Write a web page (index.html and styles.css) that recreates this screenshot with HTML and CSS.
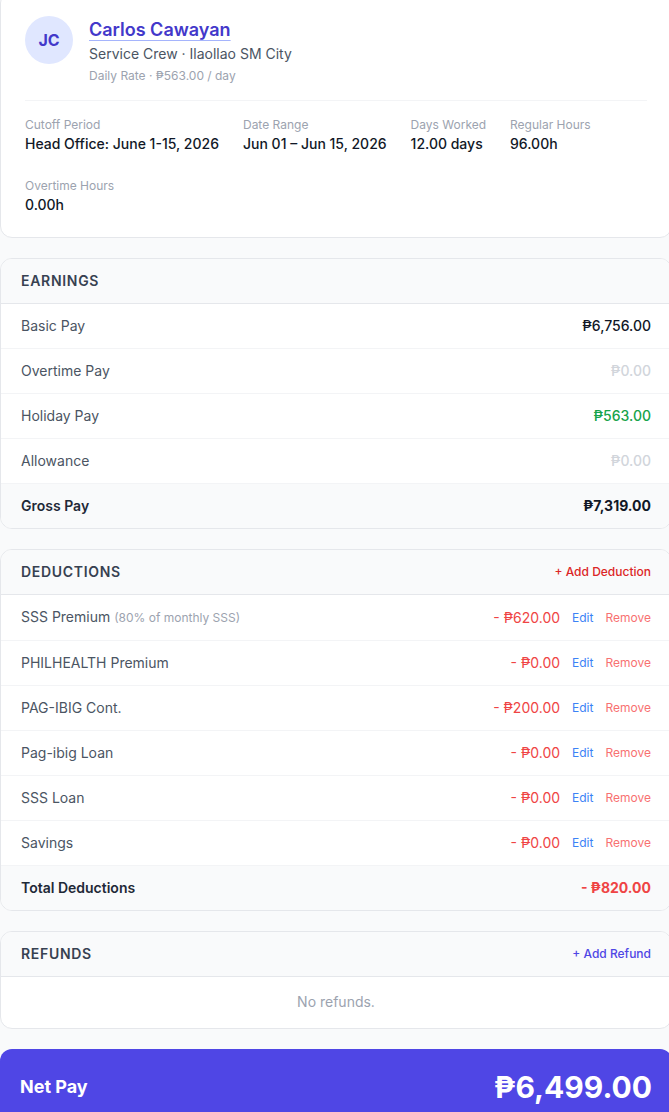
FILE: index.html
```html
<!DOCTYPE html>
<html lang="en">
<head>
    <meta charset="UTF-8">
    <meta name="viewport" content="width=device-width, initial-scale=1.0">
    <title>Payslip - Carlos Cawayan</title>
    <link rel="stylesheet" href="styles.css">
</head>
<body>
    <div class="page">
        <!-- employee summary -->
        <div class="card profile">
            <div class="profile-head">
                <div class="avatar">JC</div>
                <div>
                    <a class="name" href="#">Carlos Cawayan</a>
                    <div class="role">Service Crew · Ilaollao SM City</div>
                    <div class="rate">Daily Rate · ₱563.00 / day</div>
                </div>
            </div>
            <div class="details">
                <div class="detail">
                    <div class="detail-label">Cutoff Period</div>
                    <div class="detail-value">Head Office: June 1-15, 2026</div>
                </div>
                <div class="detail">
                    <div class="detail-label">Date Range</div>
                    <div class="detail-value">Jun 01 – Jun 15, 2026</div>
                </div>
                <div class="detail">
                    <div class="detail-label">Days Worked</div>
                    <div class="detail-value">12.00 days</div>
                </div>
                <div class="detail">
                    <div class="detail-label">Regular Hours</div>
                    <div class="detail-value">96.00h</div>
                </div>
                <div class="detail">
                    <div class="detail-label">Overtime Hours</div>
                    <div class="detail-value">0.00h</div>
                </div>
            </div>
        </div>

        <!-- earnings -->
        <div class="card section">
            <div class="section-head">
                <h3>EARNINGS</h3>
            </div>
            <div class="row">
                <span class="row-label">Basic Pay</span>
                <span class="amount">₱6,756.00</span>
            </div>
            <div class="row">
                <span class="row-label">Overtime Pay</span>
                <span class="amount muted">₱0.00</span>
            </div>
            <div class="row">
                <span class="row-label">Holiday Pay</span>
                <span class="amount green">₱563.00</span>
            </div>
            <div class="row">
                <span class="row-label">Allowance</span>
                <span class="amount muted">₱0.00</span>
            </div>
            <div class="row total">
                <span class="row-label">Gross Pay</span>
                <span class="amount">₱7,319.00</span>
            </div>
        </div>

        <!-- deductions -->
        <div class="card section">
            <div class="section-head">
                <h3>DEDUCTIONS</h3>
                <a class="add add-red" href="#">+ Add Deduction</a>
            </div>
            <div class="row">
                <span class="row-label">SSS Premium <span class="note">(80% of monthly SSS)</span></span>
                <div class="row-actions">
                    <span class="amount red">- ₱620.00</span>
                    <a class="edit" href="#">Edit</a>
                    <a class="remove" href="#">Remove</a>
                </div>
            </div>
            <div class="row">
                <span class="row-label">PHILHEALTH Premium</span>
                <div class="row-actions">
                    <span class="amount red">- ₱0.00</span>
                    <a class="edit" href="#">Edit</a>
                    <a class="remove" href="#">Remove</a>
                </div>
            </div>
            <div class="row">
                <span class="row-label">PAG-IBIG Cont.</span>
                <div class="row-actions">
                    <span class="amount red">- ₱200.00</span>
                    <a class="edit" href="#">Edit</a>
                    <a class="remove" href="#">Remove</a>
                </div>
            </div>
            <div class="row">
                <span class="row-label">Pag-ibig Loan</span>
                <div class="row-actions">
                    <span class="amount red">- ₱0.00</span>
                    <a class="edit" href="#">Edit</a>
                    <a class="remove" href="#">Remove</a>
                </div>
            </div>
            <div class="row">
                <span class="row-label">SSS Loan</span>
                <div class="row-actions">
                    <span class="amount red">- ₱0.00</span>
                    <a class="edit" href="#">Edit</a>
                    <a class="remove" href="#">Remove</a>
                </div>
            </div>
            <div class="row">
                <span class="row-label">Savings</span>
                <div class="row-actions">
                    <span class="amount red">- ₱0.00</span>
                    <a class="edit" href="#">Edit</a>
                    <a class="remove" href="#">Remove</a>
                </div>
            </div>
            <div class="row total">
                <span class="row-label">Total Deductions</span>
                <span class="amount red">- ₱820.00</span>
            </div>
        </div>

        <!-- refunds -->
        <div class="card section">
            <div class="section-head">
                <h3>REFUNDS</h3>
                <a class="add add-indigo" href="#">+ Add Refund</a>
            </div>
            <div class="empty">No refunds.</div>
        </div>

        <div class="net-pay">
            <span class="net-label">Net Pay</span>
            <span class="net-amount">₱6,499.00</span>
        </div>
    </div>
</body>
</html>
```

FILE: styles.css
```css
* {
    box-sizing: border-box;
}
html, body {
    overflow-x: hidden;
}
body {
    margin: 0;
    font-family: 'Inter', 'Noto Sans', sans-serif;
    background-color: #f9fafb;
    color: #111827;
}
a {
    text-decoration: none;
}
.page {
    display: flex;
    flex-direction: column;
    gap: 20px;
    margin-top: -9px;
    margin-right: -3px;
}
.card {
    background: white;
    border: 1px solid #e5e7eb;
    border-radius: 12px;
    overflow: hidden;
}

/* profile card */
.profile {
    padding: 24px 24px 22px;
}
.profile-head {
    display: flex;
    gap: 16px;
    padding-bottom: 16px;
    border-bottom: 1px solid #f3f4f6;
}
.avatar {
    width: 48px;
    height: 48px;
    flex-shrink: 0;
    border-radius: 50%;
    background-color: #e0e7ff;
    color: #4338ca;
    font-weight: 700;
    font-size: 16px;
    display: flex;
    align-items: center;
    justify-content: center;
}
.name {
    display: inline-block;
    font-size: 18px;
    line-height: 28px;
    font-weight: 600;
    color: #4338ca;
    text-decoration: underline;
    text-decoration-color: #a5b4fc;
    text-underline-offset: 4px;
    text-decoration-thickness: 1px;
}
.role {
    font-size: 14px;
    line-height: 20px;
    color: #4b5563;
}
.rate {
    font-size: 12px;
    line-height: 16px;
    color: #9ca3af;
    margin-top: 4px;
}
.details {
    display: flex;
    flex-wrap: wrap;
    column-gap: 24px;
    row-gap: 24px;
    padding-top: 16px;
}
.detail-label {
    font-size: 12px;
    line-height: 16px;
    color: #9ca3af;
}
.detail-value {
    font-size: 14px;
    line-height: 20px;
    font-weight: 500;
    color: #111827;
    margin-top: 1px;
}

/* sections */
.section-head {
    display: flex;
    justify-content: space-between;
    align-items: center;
    padding: 12px 20px;
    background-color: #f9fafb;
    border-bottom: 1px solid #e5e7eb;
}
.section-head h3 {
    margin: 0;
    font-size: 14px;
    line-height: 20px;
    font-weight: 600;
    letter-spacing: 0.05em;
    color: #374151;
}
.add {
    font-size: 12px;
    line-height: 16px;
    font-weight: 500;
}
.add-red {
    color: #dc2626;
}
.add-indigo {
    color: #4f46e5;
}
.row {
    display: flex;
    justify-content: space-between;
    align-items: center;
    padding: 12px 20px;
    font-size: 14px;
    line-height: 20px;
    border-bottom: 1px solid #f3f4f6;
}
.row:last-child {
    border-bottom: none;
}
.row-label {
    color: #4b5563;
}
.note {
    font-size: 12px;
    color: #9ca3af;
}
.amount {
    font-weight: 500;
    color: #111827;
}
.amount.muted {
    color: #d1d5db;
}
.amount.green {
    color: #16a34a;
}
.amount.red {
    color: #ef4444;
    font-weight: 400;
}
.row-actions {
    display: flex;
    align-items: center;
    gap: 12px;
}
.edit {
    font-size: 12px;
    color: #3b82f6;
}
.remove {
    font-size: 12px;
    color: #f87171;
}
.row.total {
    background-color: #f9fafb;
}
.row.total .row-label {
    font-weight: 600;
    color: #1f2937;
}
.row.total .amount {
    font-weight: 700;
}
.empty {
    padding: 15px 20px 16px;
    text-align: center;
    font-size: 14px;
    line-height: 20px;
    color: #9ca3af;
}

/* net pay */
.net-pay {
    display: flex;
    justify-content: space-between;
    align-items: center;
    padding: 20px;
    background-color: #4f46e5;
    border-radius: 12px;
    color: white;
}
.net-label {
    font-size: 18px;
    line-height: 28px;
    font-weight: 700;
}
.net-amount {
    font-size: 30px;
    line-height: 36px;
    font-weight: 700;
}
```
